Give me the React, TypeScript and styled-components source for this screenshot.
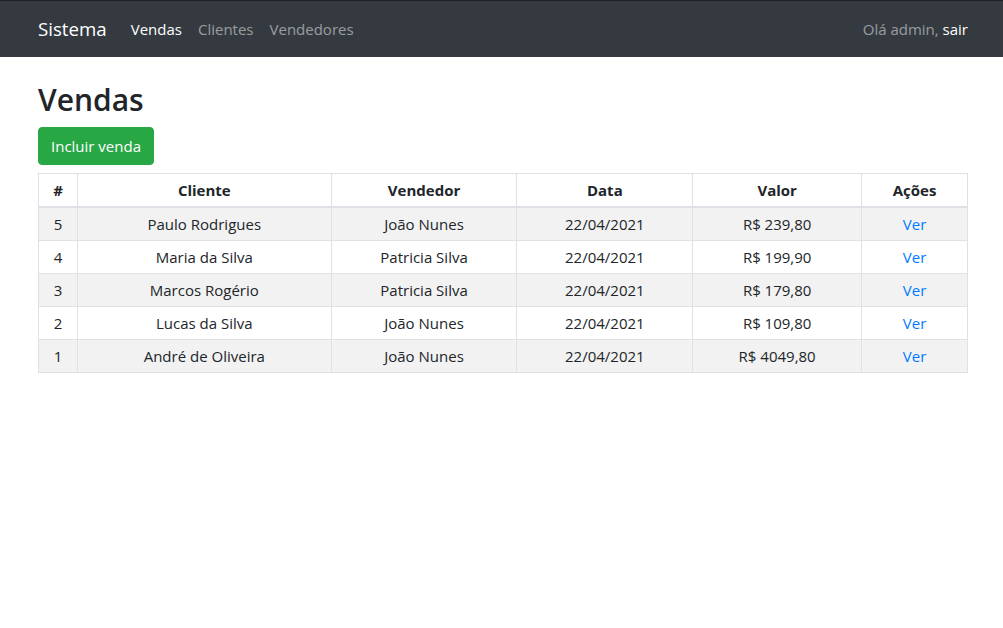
import React from "react";
import styled, { createGlobalStyle } from "styled-components";

const Global = createGlobalStyle`
  * { box-sizing: border-box; }
  body {
    margin: 0;
    font-family: "Open Sans", "Noto Sans", sans-serif;
    font-size: 15px;
    line-height: 24px;
    color: #212529;
    background: #fff;
  }
`;

const Navbar = styled.nav`
  background: #343a40;
  border-top: 1px solid #1d2124;
  padding: 8px 0;
`;

const Container = styled.div`
  width: 930px;
  margin-left: 38px;
`;

const NavInner = styled(Container)`
  display: flex;
  align-items: center;
  justify-content: space-between;
  height: 40px;
`;

const Left = styled.div`
  display: flex;
  align-items: center;
`;

const Brand = styled.a`
  font-size: 18.7px;
  line-height: 30px;
  color: #fff;
  margin-right: 16px;
  text-decoration: none;
`;

const NavLink = styled.a<{ $active?: boolean }>`
  padding: 8px 8px;
  color: ${(p) => (p.$active ? "#fff" : "rgba(255,255,255,0.5)")};
  text-decoration: none;
`;

const UserBox = styled.div`
  color: rgba(255, 255, 255, 0.5);
`;

const Exit = styled.a`
  color: #fff;
  text-decoration: none;
`;

const Main = styled(Container)`
  padding-top: 23px;
`;

const Title = styled.h1`
  font-size: 30px;
  font-weight: 600;
  line-height: 40px;
  margin: 0 0 7px;
`;

const Button = styled.button`
  font-family: inherit;
  font-size: 15px;
  line-height: 24px;
  color: #fff;
  background: #28a745;
  border: 1px solid #28a745;
  border-radius: 4px;
  padding: 6px 12px;
  margin-bottom: 8px;
  cursor: pointer;
`;

const Table = styled.table`
  width: 930px;
  border-collapse: collapse;
  text-align: center;
`;

const Th = styled.th`
  border: 1px solid #dee2e6;
  border-bottom-width: 2px;
  padding: 4px 5px;
  font-weight: 700;
  height: 33px;
`;

const Tr = styled.tr<{ $odd: boolean }>`
  background: ${(p) => (p.$odd ? "#f2f2f2" : "#fff")};
`;

const Td = styled.td`
  border: 1px solid #dee2e6;
  padding: 4px 5px;
  height: 33px;
`;

const Link = styled.a`
  color: #007bff;
  text-decoration: none;
`;

const cols = [39, 254, 186, 176, 169, 106];

const rows = [
  ["5", "Paulo Rodrigues", "João Nunes", "22/04/2021", "R$ 239,80"],
  ["4", "Maria da Silva", "Patricia Silva", "22/04/2021", "R$ 199,90"],
  ["3", "Marcos Rogério", "Patricia Silva", "22/04/2021", "R$ 179,80"],
  ["2", "Lucas da Silva", "João Nunes", "22/04/2021", "R$ 109,80"],
  ["1", "André de Oliveira", "João Nunes", "22/04/2021", "R$ 4049,80"],
];

export default function App() {
  return (
    <>
      <Global />
      <Navbar>
        <NavInner>
          <Left>
            <Brand href="#">Sistema</Brand>
            <NavLink href="#" $active>Vendas</NavLink>
            <NavLink href="#">Clientes</NavLink>
            <NavLink href="#">Vendedores</NavLink>
          </Left>
          <UserBox>
            Olá admin, <Exit href="#">sair</Exit>
          </UserBox>
        </NavInner>
      </Navbar>
      <Main>
        <Title>Vendas</Title>
        <Button>Incluir venda</Button>
        <Table>
          <colgroup>
            {cols.map((w, i) => (
              <col key={i} style={{ width: w }} />
            ))}
          </colgroup>
          <thead>
            <tr>
              <Th>#</Th>
              <Th>Cliente</Th>
              <Th>Vendedor</Th>
              <Th>Data</Th>
              <Th>Valor</Th>
              <Th>Ações</Th>
            </tr>
          </thead>
          <tbody>
            {rows.map((r, i) => (
              <Tr key={r[0]} $odd={i % 2 === 0}>
                {r.map((c, j) => (
                  <Td key={j}>{c}</Td>
                ))}
                <Td>
                  <Link href="#">Ver</Link>
                </Td>
              </Tr>
            ))}
          </tbody>
        </Table>
      </Main>
    </>
  );
}
